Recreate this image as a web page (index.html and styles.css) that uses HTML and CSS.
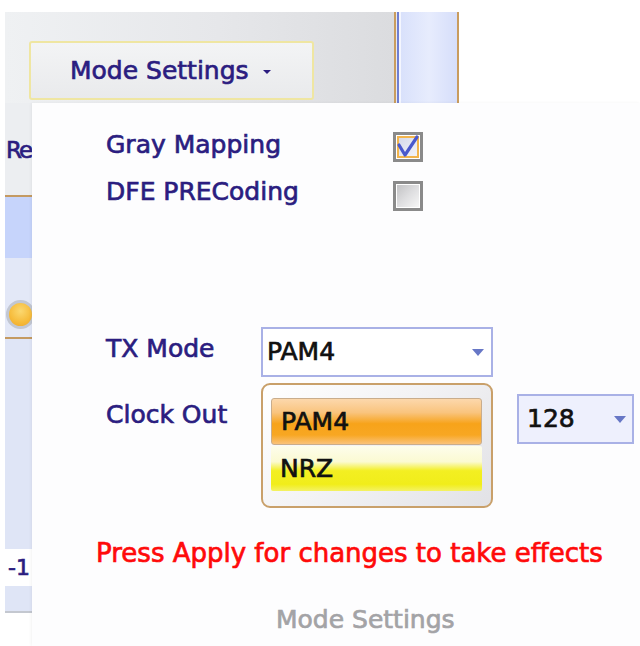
FILE: index.html
```html
<!DOCTYPE html>
<html>
<head>
<meta charset="utf-8">
<link rel="stylesheet" href="styles.css">
</head>
<body>
<div class="app">
  <div class="ribbon">
    <div class="ribbon-group">
      <div class="mode-btn"><span>Mode Settings</span><span class="btn-arrow"></span></div>
    </div>
    <div class="sep-orange"></div>
    <div class="sep-gap"></div>
    <div class="sep-blue"></div>
    <div class="sep-gap2"></div>
    <div class="ribbon-tab"></div>
    <div class="sep-orange"></div>
  </div>
  <div class="main">
    <div class="strip">
      <div class="strip-top"><span class="re">Re</span></div>
      <div class="strip-line"></div>
      <div class="strip-sel"></div>
      <div class="strip-radio-area"><div class="radio"></div></div>
      <div class="strip-line"></div>
      <div class="strip-blue"></div>
      <div class="strip-num">-1</div>
      <div class="strip-blue2"></div>
    </div>
    <div class="panel">
      <div class="check-grid">
        <div class="label">Gray Mapping</div>
        <div class="cb cb-first"><div class="cb-inner checked">
          <svg class="tick" width="22" height="22" viewBox="0 0 22 22"><path d="M2 9 L8 19 L20 1" fill="none" stroke="#4a58cc" stroke-width="3.2" stroke-linejoin="round" stroke-linecap="round"/></svg>
        </div></div>
        <div class="label">DFE PRECoding</div>
        <div class="cb cb-second"><div class="cb-inner unchecked"></div></div>
      </div>
      <div class="combo-grid">
        <div class="label label-tx">TX Mode</div>
        <div class="combo"><span>PAM4</span><span class="arrow"></span></div>
        <div></div>
        <div class="label label-clock">Clock Out</div>
        <div class="list">
          <div class="item item-sel">PAM4</div>
          <div class="item item-nrz">NRZ</div>
        </div>
        <div class="combo combo-small"><span>128</span><span class="arrow"></span></div>
      </div>
      <div class="warn">Press Apply for changes to take effects</div>
      <div class="group-title">Mode Settings</div>
    </div>
  </div>
</div>
</body>
</html>
```
FILE: styles.css
```css
* { box-sizing: border-box; }
html, body { margin: 0; padding: 0; background: #ffffff; }
body {
  width: 640px;
  height: 646px;
  overflow: hidden;
  font-family: "DejaVu Sans", Verdana, sans-serif;
  font-size: 25px;
  color: #2b1d80;
  -webkit-text-stroke: 0.7px currentColor;
}
.app { width: 640px; }

/* ribbon */
.ribbon {
  display: flex;
  height: 91px;
  margin-top: 12px;
  margin-left: 5px;
}
.ribbon-group {
  width: 389px;
  background: linear-gradient(to right, #eff1f3 0%, #e6e7ea 55%, #dbdcdf 100%);
  padding-top: 29px;
  padding-left: 24px;
}
.mode-btn {
  width: 285px;
  height: 59px;
  border: 2px solid #efe6a2;
  border-radius: 3px;
  background: linear-gradient(to bottom, #f3f4f5, #e9eaec);
  display: flex;
  align-items: center;
  padding-left: 39px;
  line-height: 30px;
}
.btn-arrow {
  width: 0; height: 0;
  margin-left: 14px;
  margin-top: 2px;
  border-left: 4px solid transparent;
  border-right: 4px solid transparent;
  border-top: 4px solid #2b1d80;
}
.sep-orange { width: 2px; background: #c99c5e; }
.sep-gap { width: 1px; background: #e9e9ef; }
.sep-blue { width: 2px; background: #6f7fd2; }
.sep-gap2 { width: 2px; background: #f4f6fe; }
.ribbon-tab {
  width: 56px;
  background: linear-gradient(to right, #d9e1fb 0%, #e7ecfd 50%, #d6defa 100%);
}

/* main */
.main { display: flex; }
.strip {
  width: 27px;
  margin-left: 5px;
  display: flex;
  flex-direction: column;
  overflow: hidden;
}
.strip-top {
  height: 92px;
  background: #eceef1;
  padding-top: 32px;
  line-height: 30px;
  white-space: nowrap;
}
.re { font-size: 23px; letter-spacing: -2px; margin-left: 1px; color: #2b1d80; }
.strip-line { height: 2px; background: #c49a62; }
.strip-sel { height: 61px; background: #c6d4fb; }
.strip-radio-area { height: 79px; background: #e3e8f7; padding-top: 42px; }
.radio {
  width: 29px; height: 29px;
  margin-left: 1px;
  border-radius: 50%;
  border: 3px solid #c2c7d2;
  background: radial-gradient(circle at 50% 35%, #fbd870 0%, #f6bb3a 60%, #eea52a 100%);
}
.strip-blue { height: 210px; background: #dfe5f6; }
.strip-num {
  height: 37px;
  background: #ffffff;
  font-size: 22px;
  line-height: 37px;
  padding-left: 3px;
  color: #2b1d80;
}
.strip-blue2 { height: 27px; background: #dfe5f6; border-bottom: 2px solid #c4c8d0; }

/* panel */
.panel {
  flex: 1;
  background: #fdfdfe;
  box-shadow: -1px 0 3px rgba(0,0,0,0.05);
  padding-left: 74px;
  padding-top: 27px;
  height: 543px;
}
.label { line-height: 30px; color: #2b1d80; white-space: nowrap; }

.check-grid {
  display: grid;
  grid-template-columns: 287px 30px;
  grid-auto-rows: 30px;
  row-gap: 17px;
}
.cb {
  width: 30px; height: 30px;
  border: 3px solid #8a8a8a;
  padding: 1px;
  background: #ffffff;
}
.cb-first { margin-top: 2px; }
.cb-second { margin-top: 4px; }
.cb-inner { width: 100%; height: 100%; position: relative; }
.cb-inner.checked {
  border: 2px solid #f2b44c;
  background: linear-gradient(135deg, #d6daea, #f3f3f8);
}
.cb-inner.unchecked {
  background: linear-gradient(135deg, #c2c2c4 0%, #dedee0 50%, #f6f6f6 100%);
}
.tick { position: absolute; left: -2px; top: -2px; overflow: visible; }

.combo-grid {
  margin-top: 120px;
  display: grid;
  grid-template-columns: 155px 232px 141px;
  row-gap: 6px;
  align-items: start;
}
.label-tx { margin-top: 7px; }
.label-clock { margin-top: 17px; }
.combo {
  height: 50px;
  border: 2px solid #a9b1e6;
  background: #ffffff;
  display: flex;
  align-items: center;
  padding-left: 4px;
  padding-right: 7px;
  color: #111111;
  line-height: 30px;
}
.arrow {
  margin-left: auto;
  width: 0; height: 0;
  border-left: 6px solid transparent;
  border-right: 6px solid transparent;
  border-top: 7px solid #6777c6;
}
.combo-small {
  width: 117px;
  margin-left: 24px;
  margin-top: 11px;
  background: #eef0fd;
  padding-left: 8px;
  padding-right: 6px;
}
.list {
  height: 125px;
  border: 2px solid #c9a06a;
  border-radius: 9px;
  background: linear-gradient(135deg, #ffffff 0%, #f3f3f5 45%, #e2e2e6 100%);
  padding: 13px 9px 0 8px;
}
.item {
  color: #111111;
  padding-left: 9px;
  display: flex;
  align-items: center;
}
.item-sel {
  height: 47px;
  border: 1px solid #c9ad8c;
  border-radius: 3px;
  background: linear-gradient(to bottom, #fcd8ac 0%, #f9c47e 30%, #f7a31a 55%, #f8a722 80%, #fac27a 100%);
}
.item-nrz {
  height: 45px;
  margin-top: 1px;
  border-radius: 2px;
  background: linear-gradient(to bottom, #fdfdec 0%, #fbfad2 35%, #f3ef22 55%, #f1ed1a 85%, #f4f264 100%);
}

.warn {
  margin-top: 30px;
  margin-left: -10px;
  font-size: 26px;
  line-height: 30px;
  color: #ff0a0a;
  white-space: nowrap;
}
.group-title {
  margin-top: 37px;
  margin-left: 170px;
  line-height: 30px;
  color: #a3a3a6;
  white-space: nowrap;
}
```
